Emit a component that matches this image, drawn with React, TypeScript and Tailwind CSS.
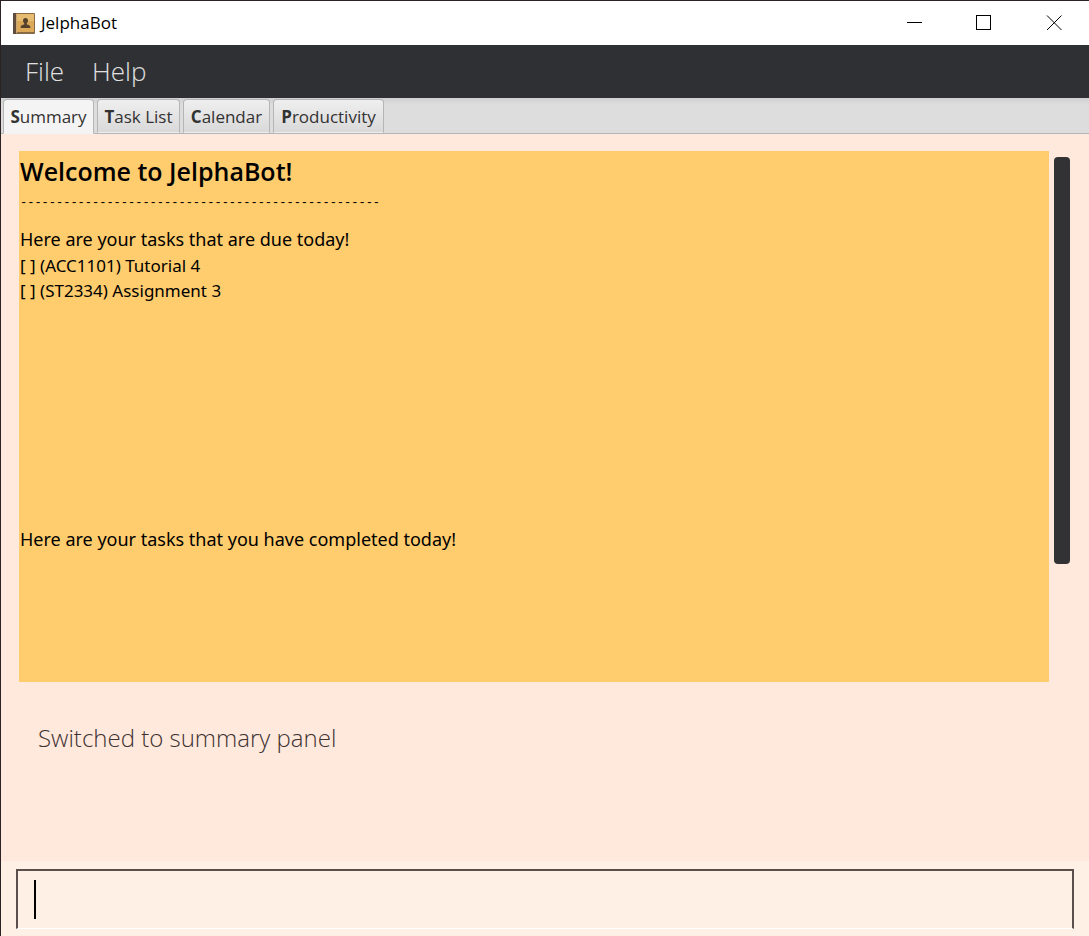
import React, { useState } from "react";

const tabs = ["Summary", "Task List", "Calendar", "Productivity"];
const tabWidths = ["w-[91px]", "w-[83px]", "w-[87px]", "w-[111px]"];

const dueToday = [
  { module: "ACC1101", name: "Tutorial 4" },
  { module: "ST2334", name: "Assignment 3" },
];

function AppIcon() {
  return (
    <svg width="22" height="21" viewBox="0 0 22 21" aria-hidden="true">
      <rect x="0" y="0" width="22" height="21" rx="1" fill="#8a6a45" />
      <rect x="0" y="0" width="3" height="21" fill="#5f4c3c" />
      <rect x="3" y="1" width="1" height="19" fill="#c9a877" />
      <rect x="4" y="1" width="17" height="18" fill="#dba958" />
      <rect x="4" y="1" width="17" height="7" fill="#e6bb72" />
      <path
        d="M12.500 5c1.600 0 2.500 1.100 2.500 2.600 0 1.200-.5 2-1.200 2.600v1.200c1.600.4 3.500.9 3.500 2.300v1.300H7.700v-1.300c0-1.400 1.900-1.900 3.500-2.300v-1.200C10.500 9.600 10 8.800 10 7.600 10 6.100 10.900 5 12.500 5z"
        fill="#56412c"
      />
    </svg>
  );
}

function TitleBar() {
  return (
    <header className="flex h-11 shrink-0 items-center justify-between bg-white pl-3">
      <div className="flex items-center gap-[6px]">
        <AppIcon />
        <h1 className="text-[17px] leading-6 text-black">JelphaBot</h1>
      </div>
      <div className="flex h-full">
        <button type="button" aria-label="Minimize" className="flex w-[70px] items-center justify-center">
          <svg width="16" height="16" viewBox="0 0 16 16" shapeRendering="crispEdges" aria-hidden="true">
            <path d="M1 7.500H16" stroke="#000" fill="none" />
          </svg>
        </button>
        <button type="button" aria-label="Maximize" className="flex w-[70px] items-center justify-center">
          <svg width="16" height="16" viewBox="0 0 16 16" shapeRendering="crispEdges" aria-hidden="true">
            <rect x="0.500" y="0.500" width="14" height="14" stroke="#000" fill="none" />
          </svg>
        </button>
        <button type="button" aria-label="Close" className="flex w-[70px] items-center justify-center">
          <svg width="16" height="16" viewBox="0 0 16 16" aria-hidden="true">
            <path d="M1 0.500L15.500 15M15.500 0.500L1 15" stroke="#000" fill="none" />
          </svg>
        </button>
      </div>
    </header>
  );
}

function TabBar({ active, onSelect }: { active: string; onSelect: (tab: string) => void }) {
  return (
    <div
      role="tablist"
      className="flex h-9 shrink-0 items-stretch gap-[3px] border-b border-[#b5b5b5] bg-linear-to-b from-[#d0d0d0] to-[#dddddd] to-20% pl-[2px] pt-px"
    >
      {tabs.map((tab, i) => {
        const look =
          tab === active
            ? "-mb-px border-b-[#f4f4f4] bg-[#f4f4f4]"
            : "border-b-transparent bg-linear-to-b from-[#efefef] to-[#d9d9d9] pt-px";
        return (
          <button
            key={tab}
            type="button"
            role="tab"
            aria-selected={tab === active}
            onClick={() => onSelect(tab)}
            className={`${tabWidths[i]} ${look} whitespace-nowrap rounded-t-[4px] border border-[#b5b5b5] text-center text-[17px] leading-6 text-[#323232]`}
          >
            <b>{tab[0]}</b>
            {tab.slice(1)}
          </button>
        );
      })}
    </div>
  );
}

function SummaryPanel() {
  const visible = 77.5;
  return (
    <div className="flex gap-[5px] pl-[18px] pr-[19px] pt-[17px]">
      <div className="h-[531px] min-w-0 flex-1 bg-[#ffcc6e] pl-px font-['Noto_Sans','Open_Sans',sans-serif] text-black">
        <h2 className="pt-1 font-['Open_Sans','Noto_Sans',sans-serif] text-[25px] font-semibold leading-8">
          Welcome to JelphaBot!
        </h2>
        <p className="mt-1 whitespace-nowrap font-['Liberation_Mono',monospace] text-[12px] leading-6">
          --------------------------------------------------
        </p>
        <section className="mt-3 h-[300px]">
          <h3 className="text-[18px] leading-6">Here are your tasks that are due today!</h3>
          <ul className="pt-[2px] text-[17px] leading-[25px]">
            {dueToday.map((task) => (
              <li key={task.module}>
                [ ] ({task.module}) {task.name}
              </li>
            ))}
          </ul>
        </section>
        <section>
          <h3 className="text-[18px] leading-6">Here are your tasks that you have completed today!</h3>
        </section>
      </div>
      <div className="w-4 pt-[6px]">
        <div className="w-4 rounded-[4px] bg-[#323234]" style={{ height: `${visible}%` }} />
      </div>
    </div>
  );
}

export default function App() {
  const [active, setActive] = useState("Summary");
  return (
    <div className="flex min-h-screen flex-col border-l border-t border-[#2b2224] bg-[#ffe8dc] font-['Open_Sans','Noto_Sans',sans-serif]">
      <TitleBar />
      <nav className="flex h-[53px] shrink-0 items-center gap-7 bg-[#2f3034] pb-[2px] pl-6 text-[26px] font-light leading-8 text-[#e0e0e0]">
        <button type="button">File</button>
        <button type="button">Help</button>
      </nav>
      <TabBar active={active} onSelect={setActive} />
      <main className="flex flex-1 flex-col">
        <SummaryPanel />
        <p role="status" className="px-[37px] pb-6 pt-10 text-[24px] font-light leading-8 text-[#3c3232]">
          Switched to summary panel
        </p>
      </main>
      <form className="h-[75px] shrink-0 bg-[#fff0e6] px-[15px] pt-2" onSubmit={(e) => e.preventDefault()}>
        <div className="flex h-[60px] items-center border-2 border-b border-b-white border-l-[#5a4f4b] border-r-[#5a4f4b] border-t-[#5a4f4b] pl-4">
          <span className="h-[39px] w-[2px] bg-black" />
          <input
            aria-label="Command"
            type="text"
            className="h-full min-w-0 flex-1 bg-transparent text-[24px] font-light outline-none"
          />
        </div>
      </form>
    </div>
  );
}
